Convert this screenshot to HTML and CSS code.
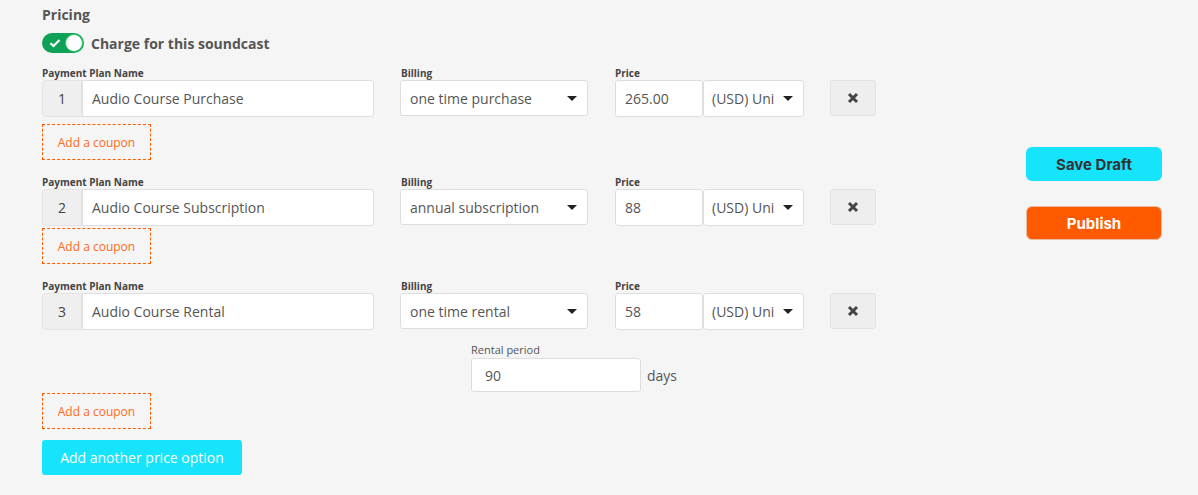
FILE: index.html
```html
<!DOCTYPE html>
<html>
<head>
<meta charset="utf-8">
<link rel="stylesheet" href="styles.css">
</head>
<body>
<div class="page">
  <div class="main">
    <h3 class="title">Pricing</h3>
    <div class="charge">
      <span class="toggle">
        <svg class="check" width="12" height="10" viewBox="0 0 12 10"><path d="M1.5 5.2 L4.5 8 L10.5 2" fill="none" stroke="#fff" stroke-width="2.2"/></svg>
        <span class="knob"></span>
      </span>
      <span class="charge-text">Charge for this soundcast</span>
    </div>

    <div class="plan">
      <div class="labels"><span class="l-name">Payment Plan Name</span><span class="l-bill">Billing</span><span class="l-price">Price</span></div>
      <div class="fields">
        <div class="num">1</div>
        <div class="inp name">Audio Course Purchase</div>
        <div class="inp sel bill">one time purchase<span class="caret"></span></div>
        <div class="inp price">265.00</div>
        <div class="inp sel cur">(USD) Uni<span class="caret"></span></div>
        <div class="del"><svg width="12" height="12" viewBox="0 0 12 12"><path d="M2 2 L10 10 M10 2 L2 10" stroke="#444" stroke-width="3"/></svg></div>
      </div>
      <div class="coupon c1">Add a coupon</div>
    </div>

    <div class="plan">
      <div class="labels"><span class="l-name">Payment Plan Name</span><span class="l-bill">Billing</span><span class="l-price">Price</span></div>
      <div class="fields">
        <div class="num">2</div>
        <div class="inp name">Audio Course Subscription</div>
        <div class="inp sel bill">annual subscription<span class="caret"></span></div>
        <div class="inp price">88</div>
        <div class="inp sel cur">(USD) Uni<span class="caret"></span></div>
        <div class="del"><svg width="12" height="12" viewBox="0 0 12 12"><path d="M2 2 L10 10 M10 2 L2 10" stroke="#444" stroke-width="3"/></svg></div>
      </div>
      <div class="coupon c2">Add a coupon</div>
    </div>

    <div class="plan">
      <div class="labels"><span class="l-name">Payment Plan Name</span><span class="l-bill">Billing</span><span class="l-price">Price</span></div>
      <div class="fields">
        <div class="num">3</div>
        <div class="inp name">Audio Course Rental</div>
        <div class="inp sel bill">one time rental<span class="caret"></span></div>
        <div class="inp price">58</div>
        <div class="inp sel cur">(USD) Uni<span class="caret"></span></div>
        <div class="del"><svg width="12" height="12" viewBox="0 0 12 12"><path d="M2 2 L10 10 M10 2 L2 10" stroke="#444" stroke-width="3"/></svg></div>
      </div>
      <div class="rental">
        <div class="r-label">Rental period</div>
        <div class="r-row"><div class="inp r-inp">90</div><span class="days">days</span></div>
      </div>
      <div class="coupon c3">Add a coupon</div>
    </div>

    <div class="add-btn">Add another price option</div>
  </div>
  <div class="side">
    <div class="btn save">Save Draft</div>
    <div class="btn publish">Publish</div>
  </div>
</div>
</body>
</html>
```

FILE: styles.css
```css
* { box-sizing: border-box; }
html, body { margin: 0; padding: 0; }
body {
  background: #f5f5f5;
  font-family: "Open Sans", "Liberation Sans", sans-serif;
  color: #555;
  width: 1198px;
  height: 495px;
  overflow: hidden;
}
.page {
  display: flex;
  padding-left: 42px;
}
.main {
  width: 834px;
  display: flex;
  flex-direction: column;
}
.title {
  margin: 0;
  padding-top: 5px;
  font-size: 14px;
  font-weight: 700;
  color: #555;
  line-height: 20px;
}
.charge {
  display: flex;
  align-items: center;
  margin-top: 8px;
  height: 20px;
}
.toggle {
  width: 42px;
  height: 20px;
  border-radius: 10px;
  background: #0fa158;
  position: relative;
  display: inline-block;
}
.check { position: absolute; left: 7px; top: 5px; }
.knob {
  position: absolute;
  right: 1px;
  top: 1px;
  width: 18px;
  height: 18px;
  border-radius: 50%;
  background: #fff;
  border: 1.5px solid #27c55f;
}
.charge-text {
  margin-left: 7px;
  font-size: 14px;
  font-weight: 700;
  color: #555;
}
.plan { display: flex; flex-direction: column; }
.labels {
  display: flex;
  font-size: 10px;
  font-weight: 700;
  color: #444;
  height: 14px;
  line-height: 14px;
  margin-top: 13px;
}
.plan + .plan .labels { margin-top: 15px; }
.l-name { width: 359px; }
.l-bill { width: 214px; }
.fields {
  display: flex;
  height: 37px;
}
.num {
  width: 40px;
  height: 37px;
  background: #efefef;
  border: 1px solid #e3e3e3;
  border-radius: 4px 0 0 4px;
  display: flex;
  align-items: center;
  justify-content: center;
  font-size: 14px;
  color: #444;
}
.inp {
  background: #fff;
  border: 1px solid #dedede;
  border-radius: 3px;
  height: 37px;
  display: flex;
  align-items: center;
  font-size: 14px;
  color: #555;
  padding-left: 9px;
  position: relative;
}
.name { width: 292px; border-radius: 0 3px 3px 0; }
.bill { width: 188px; margin-left: 26px; height: 36px; }
.price { width: 88px; margin-left: 27px; }
.cur { width: 101px; padding-left: 8px; }
.caret {
  position: absolute;
  right: 10px;
  top: 15px;
  width: 0;
  height: 0;
  border-left: 5px solid transparent;
  border-right: 5px solid transparent;
  border-top: 5px solid #222;
}
.del {
  width: 46px;
  height: 36px;
  margin-left: 26px;
  background: #eeeeee;
  border: 1px solid #e3e3e3;
  border-radius: 3px;
  display: flex;
  align-items: center;
  justify-content: center;
}
.coupon {
  width: 109px;
  height: 36px;
  border: 1px dashed #ff5a00;
  color: #ff6a1a;
  font-size: 12px;
  display: flex;
  align-items: center;
  justify-content: center;
}
.c1 { margin-top: 7px; }
.c2 { margin-top: 2px; }
.c3 { margin-top: 1px; }
.rental {
  margin-left: 429px;
  margin-top: 12px;
}
.r-label {
  font-size: 11px;
  color: #555;
  line-height: 16px;
}
.r-row { display: flex; align-items: center; }
.r-inp { width: 170px; height: 34px; padding-left: 13px; }
.days { margin-left: 6px; font-size: 14px; color: #555; }
.add-btn {
  margin-top: 11px;
  width: 200px;
  height: 35px;
  background: #15e4fc;
  border-radius: 3px;
  color: #fff;
  font-size: 14px;
  display: flex;
  align-items: center;
  justify-content: center;
}
.side {
  margin-left: 150px;
  padding-top: 147px;
  display: flex;
  flex-direction: column;
  gap: 25px;
}
.btn {
  width: 136px;
  height: 34px;
  border-radius: 6px;
  display: flex;
  align-items: center;
  justify-content: center;
  font-family: "Inter", "Liberation Sans", sans-serif;
  font-weight: 700;
  font-size: 15px;
}
.save { background: #15e4fc; color: #333; }
.publish { background: #ff5a00; color: #fff; border: 1px solid #e7bda5; }
```
